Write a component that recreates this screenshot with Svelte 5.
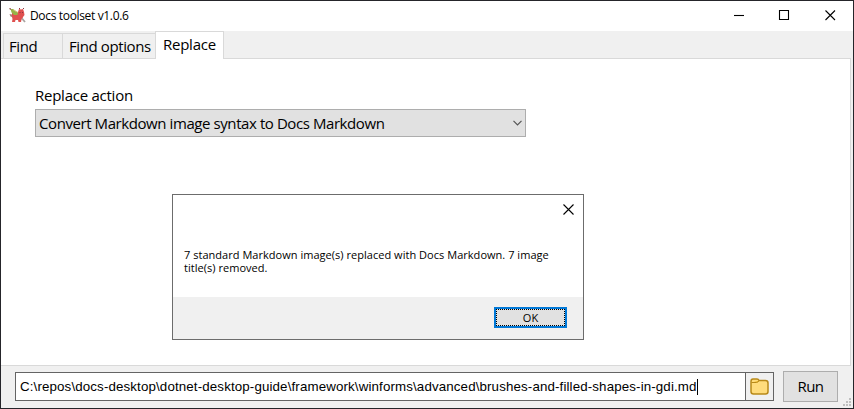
<script>
  const tabs = [
    { name: 'Find', width: 59 },
    { name: 'Find options', width: 93 },
    { name: 'Replace', width: 69 }
  ];
  let active = $state('Replace');
  let path = 'C:\\repos\\docs-desktop\\dotnet-desktop-guide\\framework\\winforms\\advanced\\brushes-and-filled-shapes-in-gdi.md';
</script>

<div class="window">
  <header>
    <svg class="logo" width="17" height="17" viewBox="0 0 17 17">
      <path d="M3 6 5 5 9 5 10 2 12 2.5 14 2 15 5 15.5 8 14 10 13.5 12 12.5 12.5 12 15 9.5 15 9 13 6.5 13 6 15 3 15 3.5 12 3 10Z" fill="#e0504f" />
      <path d="M1.5 2 4 2 9 6 8.5 8 5 8 2.5 5.5Z" fill="#96b447" />
      <path d="M4 2.5 9 5.5" stroke="#d6c47a" />
      <path d="M0 1H2V3H1ZM0.5 7 3 7.5 3 10 1.5 9.5Z" fill="#a97f76" />
      <path d="m13 11.5 3 3.5" stroke="#a9a3a0" stroke-width="1.8" fill="none" />
      <path d="M10.5 5h1v1h-1zM13 5h1v1h-1zM10 1h1v1h-1zM14 1h1v1h-1z" fill="#833942" />
    </svg>
    <span class="title">Docs toolset v1.0.6</span>
    <div class="controls">
      <svg width="46" height="30" viewBox="0 0 46 30"><path d="M18 14.5h10" /></svg>
      <svg width="46" height="30" viewBox="0 0 46 30"><path d="M17.5 9.5h9v9h-9z" /></svg>
      <svg width="46" height="30" viewBox="0 0 46 30"><path d="m17.5 9.5 9.5 9.5m0-9.5-9.5 9.5" /></svg>
    </div>
  </header>
  <nav>
    {#each tabs as tab}
      <button class="tab" class:active={tab.name === active} style:width="{tab.width}px" onclick={() => (active = tab.name)}><span>{tab.name}</span></button>
    {/each}
  </nav>
  <main>
    <div class="label">Replace action</div>
    <div class="select">
      <span>Convert Markdown image syntax to Docs Markdown</span>
      <svg width="9" height="6" viewBox="0 0 9 6"><path d="m.5.8 4 4 4-4" /></svg>
    </div>
  </main>
  <footer>
    <div class="field">
      <div class="path"><span>{path}</span><i></i></div>
      <div class="browse">
        <svg width="19" height="17" viewBox="0 0 19 17">
          <path d="M1 3.5Q1 1 3 1H7Q8.5 1 9 2.5H15.5Q18 2.5 18 5V13.5Q18 16 15.5 16H3.5Q1 16 1 13.5Z" fill="#ffdc7c" stroke="#b88919" stroke-width="1.5" />
          <path d="M1.5 4.5H6.5Q8 4.5 9 2.7" fill="#eab82e" stroke="#b88919" />
        </svg>
      </div>
    </div>
    <button class="run"><span>Run</span></button>
    <svg class="grip" width="8" height="8" viewBox="0 0 8 8"><path d="M6 0h2v2H6zM3 3h2v2H3zM6 3h2v2H6zM0 6h2v2H0zM3 6h2v2H3zM6 6h2v2H6z" /></svg>
  </footer>
</div>

<div class="dialog">
  <div class="dialog-top">
    <svg width="11" height="11" viewBox="0 0 11 11"><path d="m.5.5 10 10m0-10-10 10" /></svg>
  </div>
  <p class="message">7 standard Markdown image(s) replaced with Docs Markdown. 7 image title(s) removed.</p>
  <div class="actions"><button class="ok"><span>OK</span></button></div>
</div>

<style>
  :global(body) { margin: 0; overflow: hidden; }
  * { box-sizing: border-box; }
  span { white-space: nowrap; }
  button { font: inherit; color: inherit; padding: 0; }
  .window {
    width: 854px; height: 409px; display: flex; flex-direction: column;
    border: 1px solid #25252a; background: #f0f0f0; color: #000;
    font: 15px/20px "Open Sans", "Noto Sans", sans-serif;
  }
  header { height: 30px; flex: none; background: #fff; display: flex; align-items: center; padding-left: 8px; }
  .logo { margin-top: -1px; }
  .title { margin-left: 4px; font-size: 12px; letter-spacing: -0.34px; }
  .controls { margin: 0 -1px 0 auto; display: flex; }
  .controls path, .dialog-top path { fill: none; stroke: #000; stroke-width: 1.1; }
  nav { height: 27px; flex: none; display: flex; align-items: flex-end; padding-left: 2px; }
  .tab {
    height: 25px; border: 1px solid #d9d9d9; border-right: 0; border-bottom: 0;
    background: #f0f0f0; text-align: left; padding-left: 6px; letter-spacing: -0.4px;
  }
  .tab:first-child { padding-left: 5px; }
  .tab.active { height: 28px; margin-bottom: -1px; z-index: 1; background: #fff; border-right: 1px solid #d9d9d9; padding: 0 0 3px 7px; letter-spacing: -0.25px; }
  main { width: 850px; height: 308px; flex: none; background: #fff; border: solid #d9d9d9; border-width: 1px 1px 1px 0; padding: 26px 0 0 34px; }
  .label { height: 24px; letter-spacing: -0.25px; }
  .select {
    width: 491px; height: 28px; background: #e1e1e1; border: 1px solid #adadad;
    display: flex; align-items: center; justify-content: space-between; padding: 0 3px 0 3px; letter-spacing: -0.42px;
  }
  .select path { fill: none; stroke: #555; stroke-width: 1.2; }
  footer { flex: 1; display: flex; align-items: flex-start; padding: 5px 0 0 14px; }
  .field { width: 759px; height: 29px; margin-top: 1px; display: flex; background: #fff; border: 1px solid #646464; }
  .path { flex: 1; display: flex; align-items: center; padding: 1px 0 0 4px; letter-spacing: 0.128px; font: 13.33px/18px "Liberation Sans", Arial, sans-serif; }
  .path i { width: 1px; height: 16px; margin-top: -1px; background: #000; }
  .browse { width: 28px; border-left: 1px solid #646464; background: #f0f0f0; display: flex; align-items: center; justify-content: center; }
  .run { width: 55px; height: 31px; margin-left: 9px; padding-bottom: 1px; background: #e1e1e1; border: 1px solid #adadad; letter-spacing: -0.6px; }
  .grip { margin: 27px 0 0 5px; fill: #bfbfbf; }
  .dialog {
    position: absolute; left: 172px; top: 194px; width: 412px; height: 146px;
    display: flex; flex-direction: column; background: #fff; border: 1px solid #6c6c6c;
    font: 11px/13px "Open Sans", "Noto Sans", sans-serif; color: #000;
  }
  .dialog-top { height: 53px; display: flex; justify-content: flex-end; padding: 9px 9px 0 0; }
  .message { height: 49px; margin: 0; padding: 0 25px 0 11px; letter-spacing: 0.03px; }
  .actions { flex: 1; background: #f0f0f0; display: flex; justify-content: flex-end; padding: 10px 16px 0 0; }
  .ok { width: 73px; height: 21px; border: 2px solid #0078d7; background: #e1e1e1; outline: 1px dotted #000; outline-offset: -3px; }
</style>
